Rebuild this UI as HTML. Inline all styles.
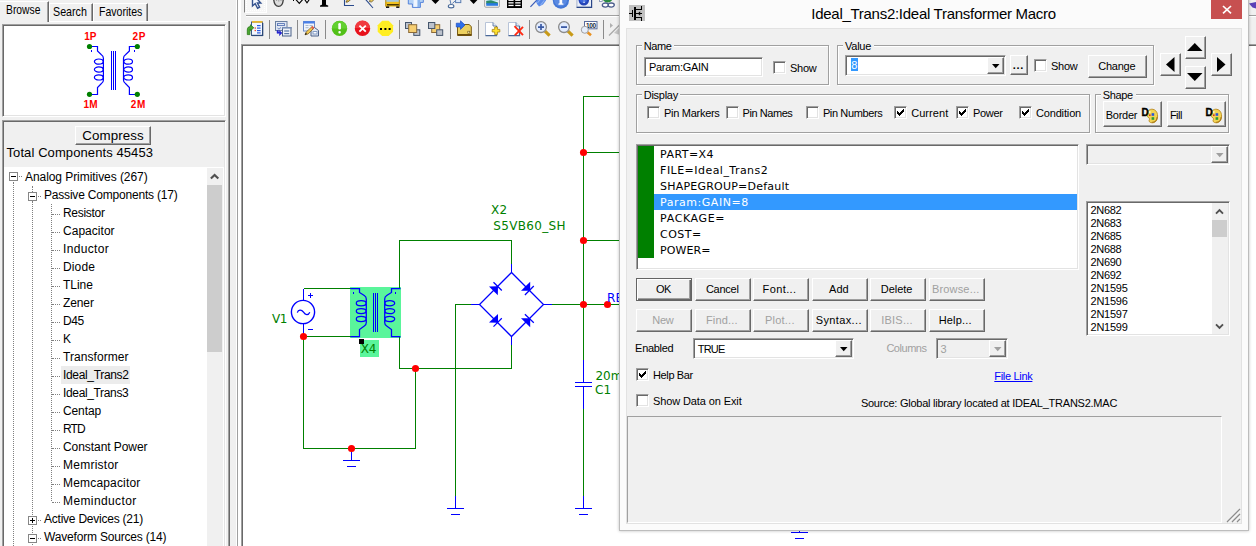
<!DOCTYPE html>
<html lang="en"><head><meta charset="utf-8"><title>Ideal_Trans2:Ideal Transformer Macro</title>
<style>
html,body{margin:0;padding:0;}
body{width:1256px;height:546px;overflow:hidden;background:#f0f0f0;font-family:"Liberation Sans",sans-serif;font-size:11px;color:#000;}
#root{position:relative;width:1256px;height:546px;overflow:hidden;background:#f0f0f0;}
.a{position:absolute;box-sizing:border-box;}
.t{position:absolute;white-space:pre;transform-origin:0 50%;}
svg{position:absolute;overflow:visible;}
.sunk{border:1px solid;border-color:#a0a0a0 #fff #fff #a0a0a0;box-shadow:inset 1px 1px 0 #696969,inset -1px -1px 0 #e3e3e3;background:#fff;}
.btn{background:#f0f0f0;border:1px solid;border-color:#fff #696969 #696969 #fff;box-shadow:inset -1px -1px 0 #a0a0a0;}
.btnd{background:#f0f0f0;border:1px solid #646464;box-shadow:inset 1px 1px 0 #fff,inset -1px -1px 0 #696969,inset -2px -2px 0 #a0a0a0;}
.grp{border:1px solid #a0a0a0;box-shadow:1px 1px 0 #fff,inset 1px 1px 0 #fff;}
.lbl{background:#f0f0f0;}
.cb{background:#fff;border:1px solid;border-color:#a0a0a0 #fff #fff #a0a0a0;box-shadow:inset 1px 1px 0 #696969,inset -1px -1px 0 #e3e3e3;}
.vsep{width:2px;border-left:1px solid #a0a0a0;border-right:1px solid #fff;}
.dot{border-left:1px dotted #808080;width:0;}
.hdot{border-top:1px dotted #808080;height:0;}
.pm{width:9px;height:9px;border:1px solid #868686;background:#fff;}
.pm i{position:absolute;left:1px;top:3px;width:5px;height:1px;background:#000;}
.pm b{position:absolute;left:3px;top:1px;width:1px;height:5px;background:#000;}
</style></head>
<body><div id="root">
<div class="a " style="left:241px;top:44px;width:1100px;height:600px;background:#fff;border-left:1px solid #a0a0a0;border-top:1px solid #a0a0a0;box-shadow:inset 1px 1px 0 #696969;"></div>
<svg class="a" style="left:0;top:0" width="1256" height="546" viewBox="0 0 1256 546"><rect x="350" y="287" width="51" height="51" fill="#5af59b"/><rect x="360" y="340" width="19" height="17" fill="#5af59b"/><rect x="359" y="339" width="5" height="5" fill="#000"/><g fill="none" stroke="#008000" stroke-width="1" shape-rendering="crispEdges"><path d="M303.5 288.5H350.5 M303.5 336.5H350.5 M399.5 288.5V240.5H511.5V264 M399.5 337V368.5H511.5V344.5 M415.5 368.5V448.5H303.5V336.5 M351.5 448.5V452 M471 304.5H455.5V496 M552 304.5H620 M583.5 359.5V96.5H620 M583.5 152.5H620 M583.5 240.5H620 M583.5 408.5V496"/></g><g fill="none" stroke="#0000ff" stroke-width="1.25"><circle cx="303" cy="312" r="11.6" stroke-width="1.4"/><path d="M303.5 288.5V300.5M303.5 323.5V336.5M308 295.5H313M310.5 293V298M308 329.5H313" stroke-width="1" shape-rendering="crispEdges"/><path d="M297.3 312.6C298.3 309.6 301.3 309 303.5 312.2C305.3 315 308.3 315.6 309.8 312.2"/><path d="M350.5 288.5H359.5V292.5L364.3 295.5Q366.3 296.7 366.3 299.1V322.4Q366.3 324.8 364.3 326L359.5 329.5V336.5H350.5M356.3 303.2A4.85 2.6 0 1 0 366 303.2A4.85 2.6 0 1 0 356.3 303.2M356.3 311.1A4.85 2.6 0 1 0 366 311.1A4.85 2.6 0 1 0 356.3 311.1M356.3 319A4.85 2.6 0 1 0 366 319A4.85 2.6 0 1 0 356.3 319"/><path d="M400.5 288.5H391.5V292.5L386.7 295.5Q384.7 296.7 384.7 299.1V322.4Q384.7 324.8 386.7 326L391.5 329.5V336.5H400.5M385 303.2A4.85 2.6 0 1 0 394.7 303.2A4.85 2.6 0 1 0 385 303.2M385 311.1A4.85 2.6 0 1 0 394.7 311.1A4.85 2.6 0 1 0 385 311.1M385 319A4.85 2.6 0 1 0 394.7 319A4.85 2.6 0 1 0 385 319"/><path d="M373.5 293V332M375.5 293V332M377.5 293V332" stroke-width="1" shape-rendering="crispEdges"/><path d="M511.5 264V272.5M471 304.5H479.5M543.5 304.5H552M511.5 336.5V344.5" stroke-width="1" shape-rendering="crispEdges"/><path d="M511.5 272.5L479.5 304.5L511.5 336.5L543.5 304.5Z"/><path d="M493.5 282.2L501.8 290.5M524.9 295L533.8 286M493.5 326.6L501.8 318.2M524.9 314.2L533.8 322.8"/><path d="M583.5 359.5V382.5M575 382.5H592M575 386.5H592M583.5 386.5V408.5" stroke-width="1" shape-rendering="crispEdges"/><path d="M351.5 452V460.5M343 460.5H360M347 466.5H356" stroke-width="1" shape-rendering="crispEdges"/><path d="M455.5 496V508.5M447 508.5H464M451 514.5H460" stroke-width="1" shape-rendering="crispEdges"/><path d="M583.5 496V508.5M575 508.5H592M579 514.5H588" stroke-width="1" shape-rendering="crispEdges"/><path d="M799.5 530V532.5M791 532.5H808M795 538.5H804" stroke-width="1" shape-rendering="crispEdges"/></g><g fill="#0000ff"><rect x="353" y="292" width="1" height="2"/><rect x="395" y="292" width="1" height="2"/><path d="M498 286.2L489 286.6L497.8 295.2Z"/><path d="M530.2 290.7L521 290.7L530.2 281.8Z"/><path d="M498 322.8L489 322.6L498 314Z"/><path d="M530.2 318.3L521 318.3L530.2 327.2Z"/></g><g fill="#ff0000"><circle cx="303.5" cy="336.5" r="3.55"/><circle cx="415.5" cy="368.5" r="3.55"/><circle cx="351.5" cy="448.5" r="3.55"/><circle cx="583.5" cy="152.5" r="3.55"/><circle cx="583.5" cy="240.5" r="3.55"/><circle cx="583.5" cy="304.5" r="3.55"/><circle cx="607.5" cy="304.5" r="3.55"/></g></svg>
<span class="t " style="left:272px;top:313px;font-size:12px;line-height:12px;font-family:'DejaVu Sans', 'Liberation Sans', sans-serif;color:#008000;letter-spacing:-0.472px;">V1</span>
<span class="t " style="left:360.7px;top:343px;font-size:12px;line-height:12px;font-family:'DejaVu Sans', 'Liberation Sans', sans-serif;color:#008000;letter-spacing:-0.080px;">X4</span>
<span class="t " style="left:491.1px;top:204px;font-size:12px;line-height:12px;font-family:'DejaVu Sans', 'Liberation Sans', sans-serif;color:#008000;letter-spacing:0.070px;">X2</span>
<span class="t " style="left:493.3px;top:220px;font-size:12px;line-height:12px;font-family:'DejaVu Sans', 'Liberation Sans', sans-serif;color:#008000;letter-spacing:0.332px;">S5VB60_SH</span>
<span class="t " style="left:595.4px;top:370px;font-size:12px;line-height:12px;font-family:'DejaVu Sans', 'Liberation Sans', sans-serif;color:#008000;">20m</span>
<span class="t " style="left:595px;top:384px;font-size:12px;line-height:12px;font-family:'DejaVu Sans', 'Liberation Sans', sans-serif;color:#008000;">C1</span>
<span class="t " style="left:607.1px;top:292px;font-size:12px;line-height:12px;font-family:'DejaVu Sans', 'Liberation Sans', sans-serif;color:#0000ff;">RE</span>
<div class="a " style="left:244px;top:-8px;width:23px;height:21px;background:#f6f6f6;border-left:1px solid #808080;border-bottom:1px solid #fff;border-right:1px solid #fff;"></div>
<div class="a " style="left:246px;top:-8px;width:19px;height:19px;border:1px dotted #fff;"></div>
<div class="a " style="left:246px;top:15px;width:1010px;height:1px;background:#a0a0a0;"></div>
<div class="a " style="left:246px;top:16px;width:1010px;height:1px;background:#fff;"></div>
<div class="a " style="left:269px;top:20px;width:1px;height:19px;background:#8a8a8a;"></div>
<div class="a " style="left:297px;top:20px;width:1px;height:19px;background:#8a8a8a;"></div>
<div class="a " style="left:325px;top:20px;width:1px;height:19px;background:#8a8a8a;"></div>
<div class="a " style="left:399px;top:20px;width:1px;height:19px;background:#8a8a8a;"></div>
<div class="a " style="left:450px;top:20px;width:1px;height:19px;background:#8a8a8a;"></div>
<div class="a " style="left:478px;top:20px;width:1px;height:19px;background:#8a8a8a;"></div>
<div class="a " style="left:529px;top:20px;width:1px;height:19px;background:#8a8a8a;"></div>
<div class="a " style="left:603px;top:20px;width:1px;height:19px;background:#8a8a8a;"></div>
<svg class="a" style="left:0;top:0" width="1256" height="44" viewBox="0 0 1256 44"><path d="M252.5 -6V6L255.2 3.6L257.6 8.2L259.6 7.2L257.4 3H260.8Z" fill="#f4f8ff" stroke="#34528e" stroke-width="1.4"/><path d="M273.6 -3C273.6 2.6 275.2 6.4 278.6 6.4C282 6.4 283.4 2.8 283.4 -3Z" fill="#dcdcdc" stroke="#3c3c3c" stroke-width="1.3"/><path d="M276.6 -2V1M278.8 -2V1.6M281 -2V1" stroke="#8a8a8a" stroke-width=".8" fill="none"/><path d="M295.8 -0.6L299.3 3.4L302.8 -0.6M304.6 -0.6L307 2.8L309.4 -0.6" fill="none" stroke="#000" stroke-width="1.1"/><rect x="293" y="0" width="1" height="1" fill="#000"/><path d="M322 -6H326V4.3C326 5 327 5.4 328.2 5.4V6.8H320V5.4C321.2 5.4 322 5 322 4.3Z" fill="#000"/><path d="M344.5 -2V5.5H354" fill="none" stroke="#2a4a8c" stroke-width="1.1"/><path d="M346 2.2L346.6 0.6L349.6 -1.6L350.8 -0.4L347.8 2Z" fill="#e8c050" stroke="#40300c" stroke-width=".6"/><path d="M365.6 -0.6L373 8" fill="none" stroke="#2a4a8c" stroke-width="1.1"/><path d="M369.4 1.6L370.4 -1L373 -2L373.4 0.4L371.4 2Z" fill="#e8c860" stroke="#40300c" stroke-width=".6"/><rect x="385.3" y="-4" width="14.4" height="6.5" fill="#a4c8e0"/><rect x="385.3" y="1.8" width="14.4" height="4.8" fill="#f2c21e"/><rect x="387" y="4.2" width="12.4" height="1.2" fill="#201800"/><rect x="386" y="6.4" width="3.2" height="1.5" fill="#000"/><rect x="396.2" y="6.4" width="3.2" height="1.5" fill="#000"/><rect x="385.3" y="-4" width="1" height="10.4" fill="#b88c10"/><rect x="398.8" y="-4" width="1" height="10.4" fill="#b88c10"/><path d="M408.3 -3H420.5V-1H423.3V2.4H420.4V7.4H412.4V4H408.3Z" fill="#b4d2f6" stroke="#4a7ad8" stroke-width=".9"/><rect x="413.6" y="-3" width="3.4" height="9.8" fill="#eef5ff"/><rect x="418" y="-3" width="2" height="10" fill="#8ab4ec"/><path d="M431.5 0L435.4 4L439.3 0L435.4 -4Z" fill="#000"/><path d="M469.8 0L473.6 4L477.4 0L473.6 -4Z" fill="#000"/><rect x="455.6" y="-4" width="5.2" height="6.6" fill="#dce8fa" stroke="#5a7cb0" stroke-width="1"/><path d="M449.6 -2L451 4.4M452.4 3.4L455.6 0.6" stroke="#5a7cb0" stroke-width="1" fill="none"/><ellipse cx="451.1" cy="6.2" rx="2.8" ry="1.7" fill="#fff" stroke="#4a6a98" stroke-width="1.1"/><rect x="484.7" y="-6" width="14.6" height="13.2" rx="1" fill="#fdfdfd" stroke="#9a9a9a" stroke-width="1"/><rect x="486.2" y="-5" width="11.8" height="6.4" fill="#bfe6f2"/><path d="M486.2 1L491 0.2L498 2.6V4H486.2Z" fill="#2a8a6a"/><rect x="486.2" y="3.2" width="11.8" height="2.6" fill="#2a7ae2"/><rect x="507" y="-6" width="15" height="14" fill="#000"/><g fill="#fff"><rect x="508.4" y="-0.4" width="5.2" height="1.3"/><rect x="515.2" y="-0.4" width="5.4" height="1.3"/><rect x="508.4" y="2.2" width="5.2" height="1.3"/><rect x="515.2" y="2.2" width="5.4" height="1.3"/><rect x="508.4" y="4.8" width="5.2" height="1.3"/><rect x="515.2" y="4.8" width="5.4" height="1.3"/></g><path d="M530.4 6.8L537.4 -0.4" stroke="#3a5cb8" stroke-width="1.2" fill="none"/><path d="M536 1.4L539 -3H546V0.6L543 4.4L539 6.4L537 4Z" fill="#5a8ae8"/><path d="M537.4 3L541.4 -2M540.6 5L544.4 0.4" stroke="#8ab0f4" stroke-width="1.1" fill="none"/><circle cx="560.9" cy="0.6" r="8.1" fill="#4377d6"/><circle cx="560.6" cy="-0.2" r="6.6" fill="#5a8ae2"/><path d="M559.5 -5H562.2V3C562.2 3.5 562.8 3.6 563.4 3.6V4.7H558.4V3.6C559 3.6 559.5 3.5 559.5 3Z" fill="#fff"/><rect x="576.9" y="-6" width="14.6" height="13.2" fill="#e9eef8" stroke="#a8b4cc" stroke-width="1"/><path d="M576.6 7.3H591.6V-6" fill="none" stroke="#2a4688" stroke-width="1.2"/><circle cx="583.8" cy="0.2" r="5.2" fill="#2444b8"/><circle cx="583.4" cy="-0.6" r="3.6" fill="#3a64da"/><rect x="583.4" y="-1" width="1.3" height="1.3" fill="#fff"/><rect x="583.4" y="1.6" width="1.3" height="1.3" fill="#fff"/><circle cx="607.6" cy="-2.6" r="5.2" fill="#2a8c3c"/><path d="M603.6 -3L607.4 -6L609.6 -1.4L605.4 0.6Z" fill="#3a5cd2"/><ellipse cx="605.4" cy="5.1" rx="3.1" ry="2.1" fill="#fff" stroke="#4a5c8c" stroke-width="1.3"/><ellipse cx="611.2" cy="5.1" rx="3.1" ry="2.1" fill="#fff" stroke="#4a5c8c" stroke-width="1.3"/><rect x="599.6" y="-1" width="2.6" height="2.4" fill="#fff" stroke="#6a7ca8" stroke-width=".7"/><rect x="251.5" y="22" width="11" height="13.5" fill="#f4f8ff" stroke="#3a5888" stroke-width="1"/><rect x="252" y="21" width="10.5" height="1.8" fill="#e8b830"/><rect x="262" y="23" width="1.3" height="13" fill="#2a4878"/><rect x="252" y="34.8" width="11" height="1.3" fill="#2a4878"/><g fill="#2a5ae0"><rect x="257" y="25" width="3.6" height="1.2"/><rect x="257" y="27.5" width="3.6" height="1.2"/><rect x="257" y="30" width="3.6" height="1.2"/><rect x="257" y="32.3" width="3.6" height="1.2"/></g><g fill="#f04020"><rect x="254.6" y="27.4" width="1.3" height="1.3"/><rect x="254.6" y="29.9" width="1.3" height="1.3"/></g><path d="M247.3 34.6V30C247.3 27.4 248.6 26.6 250.4 26.6V24.8L253.8 27.8L250.4 30.8V29C249.8 29 249.9 30 249.9 34.6Z" fill="#4aa830" stroke="#2a7a18" stroke-width=".8"/><rect x="275.5" y="21.5" width="11.5" height="9" fill="#dfe6f2" stroke="#6a7fa0" stroke-width="1"/><rect x="277.5" y="23.6" width="7" height="2" fill="none" stroke="#4a6ab0" stroke-width=".8"/><path d="M277.5 28L279 29.2L281 27.4" fill="none" stroke="#4a6ab0" stroke-width=".8"/><rect x="282.5" y="27.5" width="8.5" height="8.5" fill="#eef2f8" stroke="#4a6088" stroke-width="1"/><rect x="284.2" y="30.4" width="5" height="1.2" fill="#5a78a8"/><rect x="284.2" y="33" width="5" height="1.2" fill="#5a78a8"/><rect x="282" y="27" width="9.5" height="1.6" fill="#7a90b8"/><path d="M277 30.5V33.3H279.5V35.6L282 33L279.5 30.5V32H278.3V30.5Z" fill="#2828d8" stroke="#2020c0" stroke-width=".5"/><rect x="303.5" y="21.5" width="11" height="9.5" fill="#f0f4fa" stroke="#6a8ac8" stroke-width="1"/><rect x="303.5" y="21.3" width="11" height="2.2" fill="#4a80e8"/><g fill="#a8b8d0"><rect x="305.5" y="25" width="3" height="1"/><rect x="305.5" y="27.2" width="3" height="1"/><rect x="309.5" y="25" width="3" height="1"/></g><path d="M311 36V30.5L314.5 27.5L318.5 30.5V36Z" fill="#e4eaf4" stroke="#4a6088" stroke-width="1"/><rect x="313" y="31.6" width="4" height="2.4" fill="#fff" stroke="#6a88b8" stroke-width=".8"/><path d="M305 34.8L306.2 32L312.2 26.4L314 28.2L308 34Z" fill="#f0c850" stroke="#705018" stroke-width=".7"/><path d="M311 27.5L312.6 26L314.4 27.8L312.8 29.3Z" fill="#e06050"/><path d="M304.8 35L305.8 32.8L307 34Z" fill="#101010"/><circle cx="339.5" cy="28.4" r="7.7" fill="#52c018"/><path d="M331.9 28.6A7.6 7.6 0 0 1 347.1 28.6Z" fill="#62d030"/><rect x="338.3" y="23" width="2.6" height="6.4" rx="1.2" fill="#fff"/><rect x="338.4" y="31" width="2.4" height="2.4" rx="1" fill="#fff"/><circle cx="362.5" cy="28.4" r="7.7" fill="#e8121c"/><path d="M354.9 28A7.6 7.6 0 0 1 370.1 28Z" fill="#f03a40"/><path d="M359.4 25.6L365.8 31.6M365.8 25.6L359.4 31.6" stroke="#fff" stroke-width="1.9" fill="none"/><path d="M382.166 20.7L388.634 20.7L393.1 25.166L393.1 31.634L388.634 36.1L382.166 36.1L377.7 31.634L377.7 25.166Z" fill="#ffee22"/><g fill="#000"><rect x="380" y="28" width="2" height="2"/><rect x="384.4" y="28" width="2" height="2"/><rect x="388.6" y="28" width="2" height="2"/></g><rect x="405.5" y="22.5" width="6" height="6" fill="#bcc2cc" stroke="#46566c" stroke-width="1"/><rect x="413.8" y="29.8" width="6" height="5.6" fill="#bcc2cc" stroke="#46566c" stroke-width="1"/><rect x="408.7" y="24.7" width="8" height="7.8" fill="#f6cf72" stroke="#8a6a38" stroke-width="1"/><rect x="431.7" y="24.7" width="8" height="7.8" fill="#f6cf72" stroke="#8a6a38" stroke-width="1"/><rect x="428.5" y="22.5" width="6.3" height="6" fill="#bcc2cc" stroke="#46566c" stroke-width="1"/><rect x="436.7" y="29.8" width="6" height="5.6" fill="#bcc2cc" stroke="#46566c" stroke-width="1"/><path d="M457.5 24.5H469L471.3 26.5V35.5H457.5Z" fill="#ecd060" stroke="#7a5c14" stroke-width="1"/><rect x="458" y="34" width="13.5" height="1.8" fill="#6a4c0c"/><rect x="467.8" y="31.2" width="2" height="2" fill="#fff8c0" stroke="#6a4c0c" stroke-width=".6"/><path d="M456.3 23.2H460.5V20.8L465 25L460.5 29.4V27H456.3Z" fill="#2e70ea" stroke="#1c4cc0" stroke-width=".7"/><path d="M485.5 22.5H493L496.5 26V35.5H485.5Z" fill="#fff" stroke="#b8c4d8" stroke-width="1"/><path d="M485.5 35.6H496.5V26" fill="none" stroke="#4a6898" stroke-width="1.3"/><path d="M493 22.5V26H496.5" fill="#dfe8f4" stroke="#4a6898" stroke-width=".8"/><path d="M494.7 27H497.4V29.4H499.8V32H497.4V34.6H494.7V32H492.2V29.4H494.7Z" fill="#ffe22e" stroke="#a88410" stroke-width=".8"/><path d="M508.5 22.5H516L519.5 26V35.5H508.5Z" fill="#fff" stroke="#b8c4d8" stroke-width="1"/><path d="M508.5 35.6H519.5V26" fill="none" stroke="#4a6898" stroke-width="1.3"/><path d="M516 22.5V26H519.5" fill="#dfe8f4" stroke="#4a6898" stroke-width=".8"/><path d="M514.5 26.2L523 35.2M523 26.8L514.8 35.3" stroke="#ff2a12" stroke-width="1.9" fill="none"/><path d="M545 31.2L549.6 35.6" stroke="#c89a18" stroke-width="3.2" fill="none"/><circle cx="541" cy="27.1" r="5.4" fill="#e2ecff" stroke="#8c8c8c" stroke-width="1.3"/><path d="M538 27.1H544M541 24.1V30.1" stroke="#3a5aa4" stroke-width="1.7"/><path d="M568 31.2L572.6 35.6" stroke="#c89a18" stroke-width="3.2" fill="none"/><circle cx="564" cy="27.1" r="5.4" fill="#e2ecff" stroke="#8c8c8c" stroke-width="1.3"/><path d="M561 27.1H567" stroke="#3a5aa4" stroke-width="1.8"/><rect x="584.5" y="21.5" width="12.5" height="7.3" fill="#fff" stroke="#5a6c9c" stroke-width="1"/><text x="586" y="27.6" font-family="Liberation Sans, sans-serif" font-size="6.5" font-weight="bold" fill="#202840" textLength="10">100</text><path d="M587.5 32.2L591 35.2" stroke="#e89020" stroke-width="2.6" fill="none"/><circle cx="584.8" cy="29.8" r="3.5" fill="#e6eefc" stroke="#a0a0a0" stroke-width="1"/><path d="M610 23L613 25.5L610 28Z" fill="#b0b0b0"/><path d="M609 35.5L620 24.5" stroke="#a8a8a8" stroke-width="1.2"/><path d="M614 33L619 28L620 35Z" fill="#c4c4c4"/><path d="M1249 3.4L1256 2V8.4L1252.5 7.4Z" fill="#5a40b8"/></svg>
<div class="a " style="left:0px;top:21px;width:229px;height:1px;background:#fff;"></div>
<div class="a " style="left:228px;top:21px;width:1px;height:525px;background:#a0a0a0;"></div>
<div class="a " style="left:229px;top:21px;width:1px;height:525px;background:#696969;"></div>
<div class="a " style="left:49px;top:3px;width:44px;height:18px;border-left:1px solid #fff;border-top:1px solid #fff;border-right:1px solid #696969;box-shadow:inset -1px 0 0 #a0a0a0;"></div>
<div class="a " style="left:93px;top:3px;width:55px;height:18px;border-left:1px solid #fff;border-top:1px solid #fff;border-right:1px solid #696969;box-shadow:inset -1px 0 0 #a0a0a0;"></div>
<div class="a " style="left:0px;top:1px;width:49px;height:21px;background:#f0f0f0;border-top:1px solid #fff;border-right:1px solid #696969;box-shadow:inset -1px 0 0 #a0a0a0;"></div>
<span class="t " style="left:6px;top:3px;font-size:13px;line-height:13px;transform:scaleX(0.7934);">Browse</span>
<span class="t " style="left:52.7px;top:5px;font-size:13px;line-height:13px;transform:scaleX(0.8228);">Search</span>
<span class="t " style="left:98.9px;top:5px;font-size:13px;line-height:13px;transform:scaleX(0.8098);">Favorites</span>
<div class="a sunk" style="left:2px;top:24px;width:224px;height:93px;"></div>
<svg class="a" style="left:0;top:0" width="230" height="120" viewBox="0 0 230 120">
<g fill="none" stroke="#0000ff" stroke-width="1.2">
<path d="M89.5 46.5H97.5V51L101.4 54.7Q103.4 55.9 103.4 58.3V79.9Q103.4 82.3 101.4 83.5L97.5 87.6V94.5H89.5M94.4 61.6A4.35 2.6 0 1 0 103.1 61.6A4.35 2.6 0 1 0 94.4 61.6M94.4 69.5A4.35 2.6 0 1 0 103.1 69.5A4.35 2.6 0 1 0 94.4 69.5M94.4 77.4A4.35 2.6 0 1 0 103.1 77.4A4.35 2.6 0 1 0 94.4 77.4"/>
<path d="M137.3 46.5H129.4V51L125.5 54.7Q123.5 55.9 123.5 58.3V79.9Q123.5 82.3 125.5 83.5L129.4 87.6V94.5H137.3M123.8 61.6A4.35 2.6 0 1 0 132.5 61.6A4.35 2.6 0 1 0 123.8 61.6M123.8 69.5A4.35 2.6 0 1 0 132.5 69.5A4.35 2.6 0 1 0 123.8 69.5M123.8 77.4A4.35 2.6 0 1 0 132.5 77.4A4.35 2.6 0 1 0 123.8 77.4"/>
<path d="M111.5 51V90M113.5 51V90M115.5 51V90" stroke-width="1" shape-rendering="crispEdges"/>
</g>
<rect x="91" y="50" width="1" height="2" fill="#0000ff"/><rect x="134" y="50" width="1" height="2" fill="#0000ff"/>
<g fill="#008000"><circle cx="89.5" cy="46.5" r="2.6"/><circle cx="137.3" cy="46.5" r="2.6"/><circle cx="89.5" cy="94.3" r="2.6"/><circle cx="137.3" cy="94.3" r="2.6"/></g>
</svg>
<span class="t " style="left:84.3px;top:32px;font-size:10px;line-height:10px;color:#ff0000;font-weight:bold;letter-spacing:-0.017px;">1P</span>
<span class="t " style="left:132.5px;top:32px;font-size:10px;line-height:10px;color:#ff0000;font-weight:bold;letter-spacing:0.583px;">2P</span>
<span class="t " style="left:83.5px;top:100px;font-size:10px;line-height:10px;color:#ff0000;font-weight:bold;letter-spacing:0.197px;">1M</span>
<span class="t " style="left:130.8px;top:100px;font-size:10px;line-height:10px;color:#ff0000;font-weight:bold;letter-spacing:0.597px;">2M</span>
<div class="a sunk" style="left:2px;top:120px;width:224px;height:440px;background:#f0f0f0;"></div>
<div class="a btn" style="left:75px;top:126px;width:76px;height:19px;"></div>
<span class="t " style="left:82.2px;top:129px;font-size:13.33px;line-height:13.33px;letter-spacing:0.108px;">Compress</span>
<span class="t " style="left:6.5px;top:146px;font-size:13px;line-height:13px;letter-spacing:0.093px;">Total Components 45453</span>
<div class="a " style="left:4px;top:167px;width:220px;height:380px;background:#fff;"></div>
<div class="a " style="left:207px;top:168px;width:16px;height:380px;background:#f0f0f0;"></div>
<div class="a " style="left:207px;top:185px;width:15px;height:167px;background:#cdcdcd;"></div>
<svg class="a" style="left:207px;top:168px" width="16" height="17" viewBox="0 0 16 17"><path d="M3.9 10.6L7.6 6.9L11.3 10.6" fill="none" stroke="#505050" stroke-width="2.1"/></svg>
<div class="a dot" style="left:13px;top:182px;width:0px;height:370px;"></div>
<div class="a dot" style="left:32px;top:186px;width:0px;height:6px;"></div>
<div class="a dot" style="left:32px;top:201px;width:0px;height:350px;"></div>
<div class="a dot" style="left:51px;top:204px;width:0px;height:297px;"></div>
<div class="a hdot" style="left:19px;top:176px;width:3px;height:0px;"></div>
<div class="a hdot" style="left:38px;top:196px;width:3px;height:0px;"></div>
<div class="a " style="left:61px;top:366px;width:69px;height:18px;background:#ececec;"></div>
<span class="t " style="left:25px;top:171px;font-size:12px;line-height:12px;letter-spacing:-0.064px;">Analog Primitives (267)</span>
<span class="t " style="left:44px;top:189px;font-size:12px;line-height:12px;letter-spacing:-0.195px;">Passive Components (17)</span>
<span class="t " style="left:63px;top:207px;font-size:12px;line-height:12px;letter-spacing:-0.302px;">Resistor</span>
<div class="a hdot" style="left:52px;top:214px;width:8px;height:0px;"></div>
<span class="t " style="left:63px;top:225px;font-size:12px;line-height:12px;letter-spacing:0.027px;">Capacitor</span>
<div class="a hdot" style="left:52px;top:232px;width:8px;height:0px;"></div>
<span class="t " style="left:63px;top:243px;font-size:12px;line-height:12px;letter-spacing:0.343px;">Inductor</span>
<div class="a hdot" style="left:52px;top:250px;width:8px;height:0px;"></div>
<span class="t " style="left:63px;top:261px;font-size:12px;line-height:12px;letter-spacing:0.128px;">Diode</span>
<div class="a hdot" style="left:52px;top:268px;width:8px;height:0px;"></div>
<span class="t " style="left:63px;top:279px;font-size:12px;line-height:12px;letter-spacing:-0.026px;">TLine</span>
<div class="a hdot" style="left:52px;top:286px;width:8px;height:0px;"></div>
<span class="t " style="left:63px;top:297px;font-size:12px;line-height:12px;letter-spacing:-0.112px;">Zener</span>
<div class="a hdot" style="left:52px;top:304px;width:8px;height:0px;"></div>
<span class="t " style="left:63px;top:315px;font-size:12px;line-height:12px;letter-spacing:-0.472px;">D45</span>
<div class="a hdot" style="left:52px;top:322px;width:8px;height:0px;"></div>
<span class="t " style="left:63px;top:333px;font-size:12px;line-height:12px;letter-spacing:-0.116px;">K</span>
<div class="a hdot" style="left:52px;top:340px;width:8px;height:0px;"></div>
<span class="t " style="left:63px;top:351px;font-size:12px;line-height:12px;letter-spacing:0.063px;">Transformer</span>
<div class="a hdot" style="left:52px;top:358px;width:8px;height:0px;"></div>
<span class="t " style="left:63px;top:369px;font-size:12px;line-height:12px;letter-spacing:-0.334px;">Ideal_Trans2</span>
<div class="a hdot" style="left:52px;top:376px;width:8px;height:0px;"></div>
<span class="t " style="left:63px;top:387px;font-size:12px;line-height:12px;letter-spacing:-0.351px;">Ideal_Trans3</span>
<div class="a hdot" style="left:52px;top:394px;width:8px;height:0px;"></div>
<span class="t " style="left:63px;top:405px;font-size:12px;line-height:12px;letter-spacing:-0.117px;">Centap</span>
<div class="a hdot" style="left:52px;top:412px;width:8px;height:0px;"></div>
<span class="t " style="left:63px;top:423px;font-size:12px;line-height:12px;letter-spacing:-0.851px;">RTD</span>
<div class="a hdot" style="left:52px;top:430px;width:8px;height:0px;"></div>
<span class="t " style="left:63px;top:441px;font-size:12px;line-height:12px;letter-spacing:-0.064px;">Constant Power</span>
<div class="a hdot" style="left:52px;top:448px;width:8px;height:0px;"></div>
<span class="t " style="left:63px;top:459px;font-size:12px;line-height:12px;letter-spacing:0.251px;">Memristor</span>
<div class="a hdot" style="left:52px;top:466px;width:8px;height:0px;"></div>
<span class="t " style="left:63px;top:477px;font-size:12px;line-height:12px;letter-spacing:0.178px;">Memcapacitor</span>
<div class="a hdot" style="left:52px;top:484px;width:8px;height:0px;"></div>
<span class="t " style="left:63px;top:495px;font-size:12px;line-height:12px;letter-spacing:0.386px;">Meminductor</span>
<div class="a hdot" style="left:52px;top:502px;width:8px;height:0px;"></div>
<span class="t " style="left:44px;top:513px;font-size:12px;line-height:12px;letter-spacing:-0.230px;">Active Devices (21)</span>
<span class="t " style="left:44px;top:531px;font-size:12px;line-height:12px;letter-spacing:-0.184px;">Waveform Sources (14)</span>
<div class="a pm" style="left:9px;top:172px;width:9px;height:9px;"><i></i></div>
<div class="a pm" style="left:28px;top:192px;width:9px;height:9px;"><i></i></div>
<div class="a pm" style="left:28px;top:516px;width:9px;height:9px;"><i></i><b></b></div>
<div class="a pm" style="left:28px;top:534px;width:9px;height:9px;"><i></i></div>
<div class="a hdot" style="left:38px;top:520px;width:3px;height:0px;"></div>
<div class="a hdot" style="left:38px;top:538px;width:3px;height:0px;"></div>
<div class="a " style="left:236px;top:0px;width:1px;height:546px;background:#fff;"></div>
<div class="a " style="left:237px;top:0px;width:1px;height:546px;background:#a0a0a0;"></div>
<div class="a " style="left:238px;top:0px;width:3px;height:546px;background:#fff;"></div>
<div class="a " style="left:619px;top:-2px;width:630px;height:533px;background:#fbfbfb;border:1px solid #bdbdbd;box-shadow:0 0 3px rgba(0,0,0,.25);"></div>
<div class="a " style="left:626px;top:28px;width:616px;height:496px;background:#f0f0f0;border:1px solid #e2e2e2;"></div>
<div class="a " style="left:629px;top:5px;width:16px;height:16px;background:#c0c0c0;"></div>
<svg class="a" style="left:629px;top:5px" width="16" height="16" viewBox="0 0 16 16"><g fill="#000" shape-rendering="crispEdges"><rect x="0" y="8" width="4" height="1"/><rect x="3" y="5" width="1" height="7"/><rect x="5" y="2" width="2" height="13"/><rect x="7" y="4" width="6" height="1"/><rect x="12" y="1" width="1" height="4"/><rect x="7" y="8" width="6" height="1"/><rect x="7" y="12" width="6" height="1"/><rect x="12" y="12" width="1" height="4"/></g><path d="M8.8 8.5L11.2 6.2V10.8Z" fill="#000"/></svg>
<span class="t " style="left:811.3px;top:6px;font-size:15px;line-height:15px;letter-spacing:-0.277px;">Ideal_Trans2:Ideal Transformer Macro</span>
<div class="a " style="left:1211px;top:-1px;width:31px;height:20px;background:#c75050;"></div>
<svg class="a" style="left:1211px;top:0" width="31" height="19" viewBox="0 0 31 19"><path d="M12 6L20 13.4M20 6L12 13.4" stroke="#fff" stroke-width="1.7" fill="none"/></svg>
<div class="a grp" style="left:636px;top:45px;width:193px;height:40px;"></div>
<div class="a lbl" style="left:642px;top:40px;width:32px;height:12px;"></div>
<span class="t " style="left:643.8px;top:41px;font-size:11px;line-height:11px;letter-spacing:-0.436px;">Name</span>
<div class="a sunk" style="left:644px;top:57px;width:119px;height:20px;"></div>
<span class="t " style="left:648.9px;top:62px;font-size:11px;line-height:11px;letter-spacing:-0.276px;">Param:GAIN</span>
<div class="a cb" style="left:773px;top:61px;width:13px;height:13px;"></div>
<span class="t " style="left:790px;top:63px;font-size:11px;line-height:11px;letter-spacing:-0.233px;">Show</span>
<div class="a grp" style="left:837px;top:45px;width:317px;height:40px;"></div>
<div class="a lbl" style="left:843px;top:40px;width:31px;height:12px;"></div>
<span class="t " style="left:845px;top:41px;font-size:11px;line-height:11px;letter-spacing:-0.246px;">Value</span>
<div class="a sunk" style="left:845px;top:55px;width:161px;height:21px;"></div>
<div class="a " style="left:851px;top:58px;width:7px;height:13px;background:#3399ff;"></div>
<span class="t " style="left:851.3px;top:60px;font-size:11px;line-height:11px;color:#fff;">8</span>
<div class="a btn" style="left:987px;top:57px;width:17px;height:17px;"></div>
<svg class="a" style="left:991.7px;top:64px" width="7.5" height="4.2" viewBox="0 0 7.5 4.2"><path d="M0 0H7.5L3.75 4.2Z" fill="#000"/></svg>
<div class="a btn" style="left:1010px;top:55px;width:18px;height:20px;"></div>
<span class="t " style="left:1012.8px;top:60px;font-size:11px;line-height:11px;font-weight:bold;letter-spacing:0.676px;">...</span>
<div class="a cb" style="left:1034px;top:59px;width:13px;height:13px;"></div>
<span class="t " style="left:1050.9px;top:61px;font-size:11px;line-height:11px;letter-spacing:-0.233px;">Show</span>
<div class="a btn" style="left:1088px;top:55px;width:59px;height:23px;"></div>
<span class="t " style="left:1098.2px;top:61px;font-size:11px;line-height:11px;letter-spacing:-0.224px;">Change</span>
<div class="a btn" style="left:1160px;top:53px;width:21px;height:23px;"></div>
<svg class="a" style="left:1166px;top:57px" width="8.5" height="15" viewBox="0 0 8.5 15"><path d="M8.5 0V15L0 7.5Z" fill="#000"/></svg>
<div class="a btn" style="left:1185px;top:36px;width:21px;height:23px;"></div>
<svg class="a" style="left:1187px;top:43px" width="15.5" height="8" viewBox="0 0 15.5 8"><path d="M0 8H15.5L7.75 0Z" fill="#000"/></svg>
<div class="a btn" style="left:1185px;top:66px;width:21px;height:23px;"></div>
<svg class="a" style="left:1187px;top:73px" width="15.5" height="8" viewBox="0 0 15.5 8"><path d="M0 0H15.5L7.75 8Z" fill="#000"/></svg>
<div class="a btn" style="left:1211px;top:53px;width:21px;height:23px;"></div>
<svg class="a" style="left:1217px;top:57px" width="8.5" height="15" viewBox="0 0 8.5 15"><path d="M0 0V15L8.5 7.5Z" fill="#000"/></svg>
<div class="a grp" style="left:636px;top:94px;width:454px;height:39px;"></div>
<div class="a lbl" style="left:642px;top:89px;width:38px;height:12px;"></div>
<span class="t " style="left:643.8px;top:90px;font-size:11px;line-height:11px;letter-spacing:-0.283px;">Display</span>
<div class="a cb" style="left:647px;top:106px;width:13px;height:13px;"></div>
<span class="t " style="left:664px;top:108px;font-size:11px;line-height:11px;letter-spacing:-0.281px;">Pin Markers</span>
<div class="a cb" style="left:726px;top:106px;width:13px;height:13px;"></div>
<span class="t " style="left:742.5px;top:108px;font-size:11px;line-height:11px;letter-spacing:-0.433px;">Pin Names</span>
<div class="a cb" style="left:806px;top:106px;width:13px;height:13px;"></div>
<span class="t " style="left:822.9px;top:108px;font-size:11px;line-height:11px;letter-spacing:-0.380px;">Pin Numbers</span>
<div class="a cb" style="left:894px;top:106px;width:13px;height:13px;"><svg class="a" style="left:2px;top:2px" width="7" height="7" viewBox="0 0 7 7" shape-rendering="crispEdges"><path d="M0 2h1v1h1v1h1v-1h1v-1h1v-1h1v-1h1v3h-1v1h-1v1h-1v1h-1v1h-1v-1h-1v-1h-1z" fill="#000"/></svg></div>
<span class="t " style="left:911.2px;top:108px;font-size:11px;line-height:11px;letter-spacing:0.059px;">Current</span>
<div class="a cb" style="left:956px;top:106px;width:13px;height:13px;"><svg class="a" style="left:2px;top:2px" width="7" height="7" viewBox="0 0 7 7" shape-rendering="crispEdges"><path d="M0 2h1v1h1v1h1v-1h1v-1h1v-1h1v-1h1v3h-1v1h-1v1h-1v1h-1v1h-1v-1h-1v-1h-1z" fill="#000"/></svg></div>
<span class="t " style="left:972.9px;top:108px;font-size:11px;line-height:11px;letter-spacing:-0.277px;">Power</span>
<div class="a cb" style="left:1019px;top:106px;width:13px;height:13px;"><svg class="a" style="left:2px;top:2px" width="7" height="7" viewBox="0 0 7 7" shape-rendering="crispEdges"><path d="M0 2h1v1h1v1h1v-1h1v-1h1v-1h1v-1h1v3h-1v1h-1v1h-1v1h-1v1h-1v-1h-1v-1h-1z" fill="#000"/></svg></div>
<span class="t " style="left:1035.9px;top:108px;font-size:11px;line-height:11px;letter-spacing:-0.143px;">Condition</span>
<div class="a grp" style="left:1095px;top:94px;width:134px;height:39px;"></div>
<div class="a lbl" style="left:1101px;top:89px;width:35px;height:12px;"></div>
<span class="t " style="left:1102.8px;top:90px;font-size:11px;line-height:11px;letter-spacing:-0.342px;">Shape</span>
<div class="a btn" style="left:1103px;top:101px;width:59px;height:26px;"></div>
<span class="t " style="left:1105.7px;top:110px;font-size:11px;line-height:11px;letter-spacing:-0.239px;">Border</span>
<div class="a btn" style="left:1167px;top:101px;width:59px;height:26px;"></div>
<span class="t " style="left:1169.9px;top:110px;font-size:11px;line-height:11px;letter-spacing:-0.491px;">Fill</span>
<svg class="a" style="left:1140px;top:104px" width="20" height="20" viewBox="0 0 20 20"><path d="M11.8 5.2C15.2 5.2 17.6 8 17.6 12C17.6 16 15.4 18.8 12.2 18.8C9.6 18.8 8.4 17.2 9.4 15.6C10.2 14.2 8.2 13.6 7.2 12.4C5.6 10.4 8 5.2 11.8 5.2Z" fill="#f2d452" stroke="#c0922a" stroke-width="1"/><path d="M17.2 13C17 16 15 18.4 12.2 18.4" fill="none" stroke="#a87818" stroke-width="1.2"/><rect x="11.6" y="9.2" width="2.6" height="2.6" fill="#2a56d8"/><rect x="11.6" y="13.2" width="2.6" height="2.6" fill="#2a9c36"/><rect x="9" y="10.4" width="1.6" height="1.6" fill="#e03020"/><circle cx="9.6" cy="8" r="1.1" fill="#fff8d0"/><text x="1.6" y="11.7" font-family="Liberation Sans, sans-serif" font-size="10" font-weight="bold" fill="#000" stroke="#000" stroke-width=".35">D</text></svg>
<svg class="a" style="left:1204px;top:104px" width="20" height="20" viewBox="0 0 20 20"><path d="M11.8 5.2C15.2 5.2 17.6 8 17.6 12C17.6 16 15.4 18.8 12.2 18.8C9.6 18.8 8.4 17.2 9.4 15.6C10.2 14.2 8.2 13.6 7.2 12.4C5.6 10.4 8 5.2 11.8 5.2Z" fill="#f2d452" stroke="#c0922a" stroke-width="1"/><path d="M17.2 13C17 16 15 18.4 12.2 18.4" fill="none" stroke="#a87818" stroke-width="1.2"/><rect x="11.6" y="9.2" width="2.6" height="2.6" fill="#2a56d8"/><rect x="11.6" y="13.2" width="2.6" height="2.6" fill="#2a9c36"/><rect x="9" y="10.4" width="1.6" height="1.6" fill="#e03020"/><circle cx="9.6" cy="8" r="1.1" fill="#fff8d0"/><text x="1.6" y="11.7" font-family="Liberation Sans, sans-serif" font-size="10" font-weight="bold" fill="#000" stroke="#000" stroke-width=".35">D</text></svg>
<div class="a sunk" style="left:636px;top:144px;width:443px;height:126px;"></div>
<div class="a " style="left:638px;top:146px;width:16px;height:112px;background:#008000;"></div>
<div class="a " style="left:654px;top:194px;width:423px;height:16px;background:#3399ff;"></div>
<span class="t " style="left:660.1px;top:149px;font-size:11px;line-height:11px;font-family:'DejaVu Sans', 'Liberation Sans', sans-serif;color:#000;letter-spacing:0.446px;">PART=X4</span>
<span class="t " style="left:660.1px;top:165px;font-size:11px;line-height:11px;font-family:'DejaVu Sans', 'Liberation Sans', sans-serif;color:#000;letter-spacing:0.463px;">FILE=Ideal_Trans2</span>
<span class="t " style="left:660.1px;top:181px;font-size:11px;line-height:11px;font-family:'DejaVu Sans', 'Liberation Sans', sans-serif;color:#000;letter-spacing:0.212px;">SHAPEGROUP=Default</span>
<span class="t " style="left:660.1px;top:197px;font-size:11px;line-height:11px;font-family:'DejaVu Sans', 'Liberation Sans', sans-serif;color:#fff;letter-spacing:0.524px;">Param:GAIN=8</span>
<span class="t " style="left:660.1px;top:213px;font-size:11px;line-height:11px;font-family:'DejaVu Sans', 'Liberation Sans', sans-serif;color:#000;letter-spacing:0.639px;">PACKAGE=</span>
<span class="t " style="left:660.1px;top:229px;font-size:11px;line-height:11px;font-family:'DejaVu Sans', 'Liberation Sans', sans-serif;color:#000;letter-spacing:0.467px;">COST=</span>
<span class="t " style="left:660.1px;top:245px;font-size:11px;line-height:11px;font-family:'DejaVu Sans', 'Liberation Sans', sans-serif;color:#000;letter-spacing:0.103px;">POWER=</span>
<div class="a sunk" style="left:1086px;top:144px;width:144px;height:21px;background:#f0f0f0;"></div>
<div class="a btn" style="left:1211px;top:146px;width:17px;height:17px;"></div>
<svg class="a" style="left:1215.8px;top:152.8px" width="7.5" height="4.2" viewBox="0 0 7.5 4.2"><path d="M0 0H7.5L3.75 4.2Z" fill="#a0a0a0"/></svg>
<div class="a sunk" style="left:1086px;top:201px;width:144px;height:135px;"></div>
<span class="t " style="left:1090.5px;top:205px;font-size:11px;line-height:11px;letter-spacing:-0.304px;">2N682</span>
<span class="t " style="left:1090.5px;top:218px;font-size:11px;line-height:11px;letter-spacing:-0.304px;">2N683</span>
<span class="t " style="left:1090.5px;top:231px;font-size:11px;line-height:11px;letter-spacing:-0.304px;">2N685</span>
<span class="t " style="left:1090.5px;top:244px;font-size:11px;line-height:11px;letter-spacing:-0.304px;">2N688</span>
<span class="t " style="left:1090.5px;top:257px;font-size:11px;line-height:11px;letter-spacing:-0.304px;">2N690</span>
<span class="t " style="left:1090.5px;top:270px;font-size:11px;line-height:11px;letter-spacing:-0.304px;">2N692</span>
<span class="t " style="left:1090.5px;top:283px;font-size:11px;line-height:11px;letter-spacing:-0.241px;">2N1595</span>
<span class="t " style="left:1090.5px;top:296px;font-size:11px;line-height:11px;letter-spacing:-0.241px;">2N1596</span>
<span class="t " style="left:1090.5px;top:309px;font-size:11px;line-height:11px;letter-spacing:-0.241px;">2N1597</span>
<span class="t " style="left:1090.5px;top:322px;font-size:11px;line-height:11px;letter-spacing:-0.241px;">2N1599</span>
<div class="a " style="left:1212px;top:203px;width:16px;height:131px;background:#f0f0f0;"></div>
<div class="a " style="left:1212px;top:220px;width:15px;height:17px;background:#cdcdcd;"></div>
<svg class="a" style="left:1212px;top:203px" width="15" height="17" viewBox="0 0 15 17"><path d="M4 10.6L7.5 7.1L11 10.6" fill="none" stroke="#505050" stroke-width="1.9"/></svg>
<svg class="a" style="left:1212px;top:318px" width="15" height="17" viewBox="0 0 15 17"><path d="M4 6.4L7.5 9.9L11 6.4" fill="none" stroke="#505050" stroke-width="1.9"/></svg>
<div class="a btnd" style="left:636px;top:278px;width:56px;height:23px;"></div>
<span class="t " style="left:656px;top:284px;font-size:11px;line-height:11px;letter-spacing:-0.503px;">OK</span>
<div class="a btn" style="left:695px;top:278px;width:56px;height:23px;"></div>
<span class="t " style="left:705.9px;top:284px;font-size:11px;line-height:11px;letter-spacing:-0.258px;">Cancel</span>
<div class="a btn" style="left:753px;top:278px;width:56px;height:23px;"></div>
<span class="t " style="left:762.6px;top:284px;font-size:11px;line-height:11px;letter-spacing:0.387px;">Font...</span>
<div class="a btn" style="left:812px;top:278px;width:56px;height:23px;"></div>
<span class="t " style="left:829px;top:284px;font-size:11px;line-height:11px;letter-spacing:0.074px;">Add</span>
<div class="a btn" style="left:870px;top:278px;width:56px;height:23px;"></div>
<span class="t " style="left:880.7px;top:284px;font-size:11px;line-height:11px;letter-spacing:0.001px;">Delete</span>
<div class="a btn" style="left:929px;top:278px;width:56px;height:23px;"></div>
<span class="t " style="left:931.9px;top:284px;font-size:11px;line-height:11px;color:#a0a0a0;letter-spacing:0.182px;">Browse...</span>
<div class="a btn" style="left:636px;top:309px;width:56px;height:23px;"></div>
<span class="t " style="left:652.2px;top:315px;font-size:11px;line-height:11px;color:#a0a0a0;letter-spacing:-0.239px;">New</span>
<div class="a btn" style="left:695px;top:309px;width:56px;height:23px;"></div>
<span class="t " style="left:705.9px;top:315px;font-size:11px;line-height:11px;color:#a0a0a0;letter-spacing:0.189px;">Find...</span>
<div class="a btn" style="left:753px;top:309px;width:56px;height:23px;"></div>
<span class="t " style="left:764.9px;top:315px;font-size:11px;line-height:11px;color:#a0a0a0;letter-spacing:0.239px;">Plot...</span>
<div class="a btn" style="left:812px;top:309px;width:56px;height:23px;"></div>
<span class="t " style="left:815.8px;top:315px;font-size:11px;line-height:11px;letter-spacing:0.356px;">Syntax...</span>
<div class="a btn" style="left:870px;top:309px;width:56px;height:23px;"></div>
<span class="t " style="left:881.2px;top:315px;font-size:11px;line-height:11px;color:#a0a0a0;letter-spacing:0.233px;">IBIS...</span>
<div class="a btn" style="left:929px;top:309px;width:56px;height:23px;"></div>
<span class="t " style="left:938.7px;top:315px;font-size:11px;line-height:11px;letter-spacing:0.186px;">Help...</span>
<span class="t " style="left:635.1px;top:343px;font-size:11px;line-height:11px;letter-spacing:-0.296px;">Enabled</span>
<div class="a sunk" style="left:693px;top:338px;width:161px;height:21px;"></div>
<span class="t " style="left:697.8px;top:344px;font-size:11px;line-height:11px;letter-spacing:-0.838px;">TRUE</span>
<div class="a btn" style="left:835px;top:340px;width:17px;height:17px;"></div>
<svg class="a" style="left:839.8px;top:346.8px" width="7.5" height="4.2" viewBox="0 0 7.5 4.2"><path d="M0 0H7.5L3.75 4.2Z" fill="#000"/></svg>
<span class="t " style="left:886.4px;top:343px;font-size:11px;line-height:11px;color:#a0a0a0;letter-spacing:-0.472px;">Columns</span>
<div class="a sunk" style="left:936px;top:338px;width:72px;height:21px;background:#f0f0f0;"></div>
<span class="t " style="left:940.5px;top:344px;font-size:11px;line-height:11px;color:#a0a0a0;">3</span>
<div class="a btn" style="left:989px;top:340px;width:17px;height:17px;"></div>
<svg class="a" style="left:993.8px;top:346.8px" width="7.5" height="4.2" viewBox="0 0 7.5 4.2"><path d="M0 0H7.5L3.75 4.2Z" fill="#a0a0a0"/></svg>
<div class="a cb" style="left:636px;top:368px;width:13px;height:13px;"><svg class="a" style="left:2px;top:2px" width="7" height="7" viewBox="0 0 7 7" shape-rendering="crispEdges"><path d="M0 2h1v1h1v1h1v-1h1v-1h1v-1h1v-1h1v3h-1v1h-1v1h-1v1h-1v1h-1v-1h-1v-1h-1z" fill="#000"/></svg></div>
<span class="t " style="left:653px;top:370px;font-size:11px;line-height:11px;letter-spacing:-0.362px;">Help Bar</span>
<div class="a cb" style="left:636px;top:394px;width:13px;height:13px;"></div>
<span class="t " style="left:653px;top:396px;font-size:11px;line-height:11px;letter-spacing:-0.112px;">Show Data on Exit</span>
<span class="t " style="left:994.3px;top:371px;font-size:11px;line-height:11px;color:#0000ff;letter-spacing:-0.319px;text-decoration:underline;">File Link</span>
<span class="t " style="left:860.9px;top:398px;font-size:11px;line-height:11px;letter-spacing:-0.244px;">Source: Global library located at IDEAL_TRANS2.MAC</span>
<div class="a " style="left:627px;top:416px;width:595px;height:107px;border:1px solid;border-color:#a0a0a0 #fff #fff #a0a0a0;background:#f0f0f0;"></div>
<svg class="a" style="left:1226px;top:508px" width="15" height="15" viewBox="0 0 15 15"><path d="M2 14L14 2M7 14L14 7M12 14L14 12" stroke="#fff" stroke-width="1.2" fill="none"/><path d="M1 14L14 1M6 14L14 6M11 14L14 11" stroke="#8c8c8c" stroke-width="1.3" fill="none"/></svg>
</div></body></html>
